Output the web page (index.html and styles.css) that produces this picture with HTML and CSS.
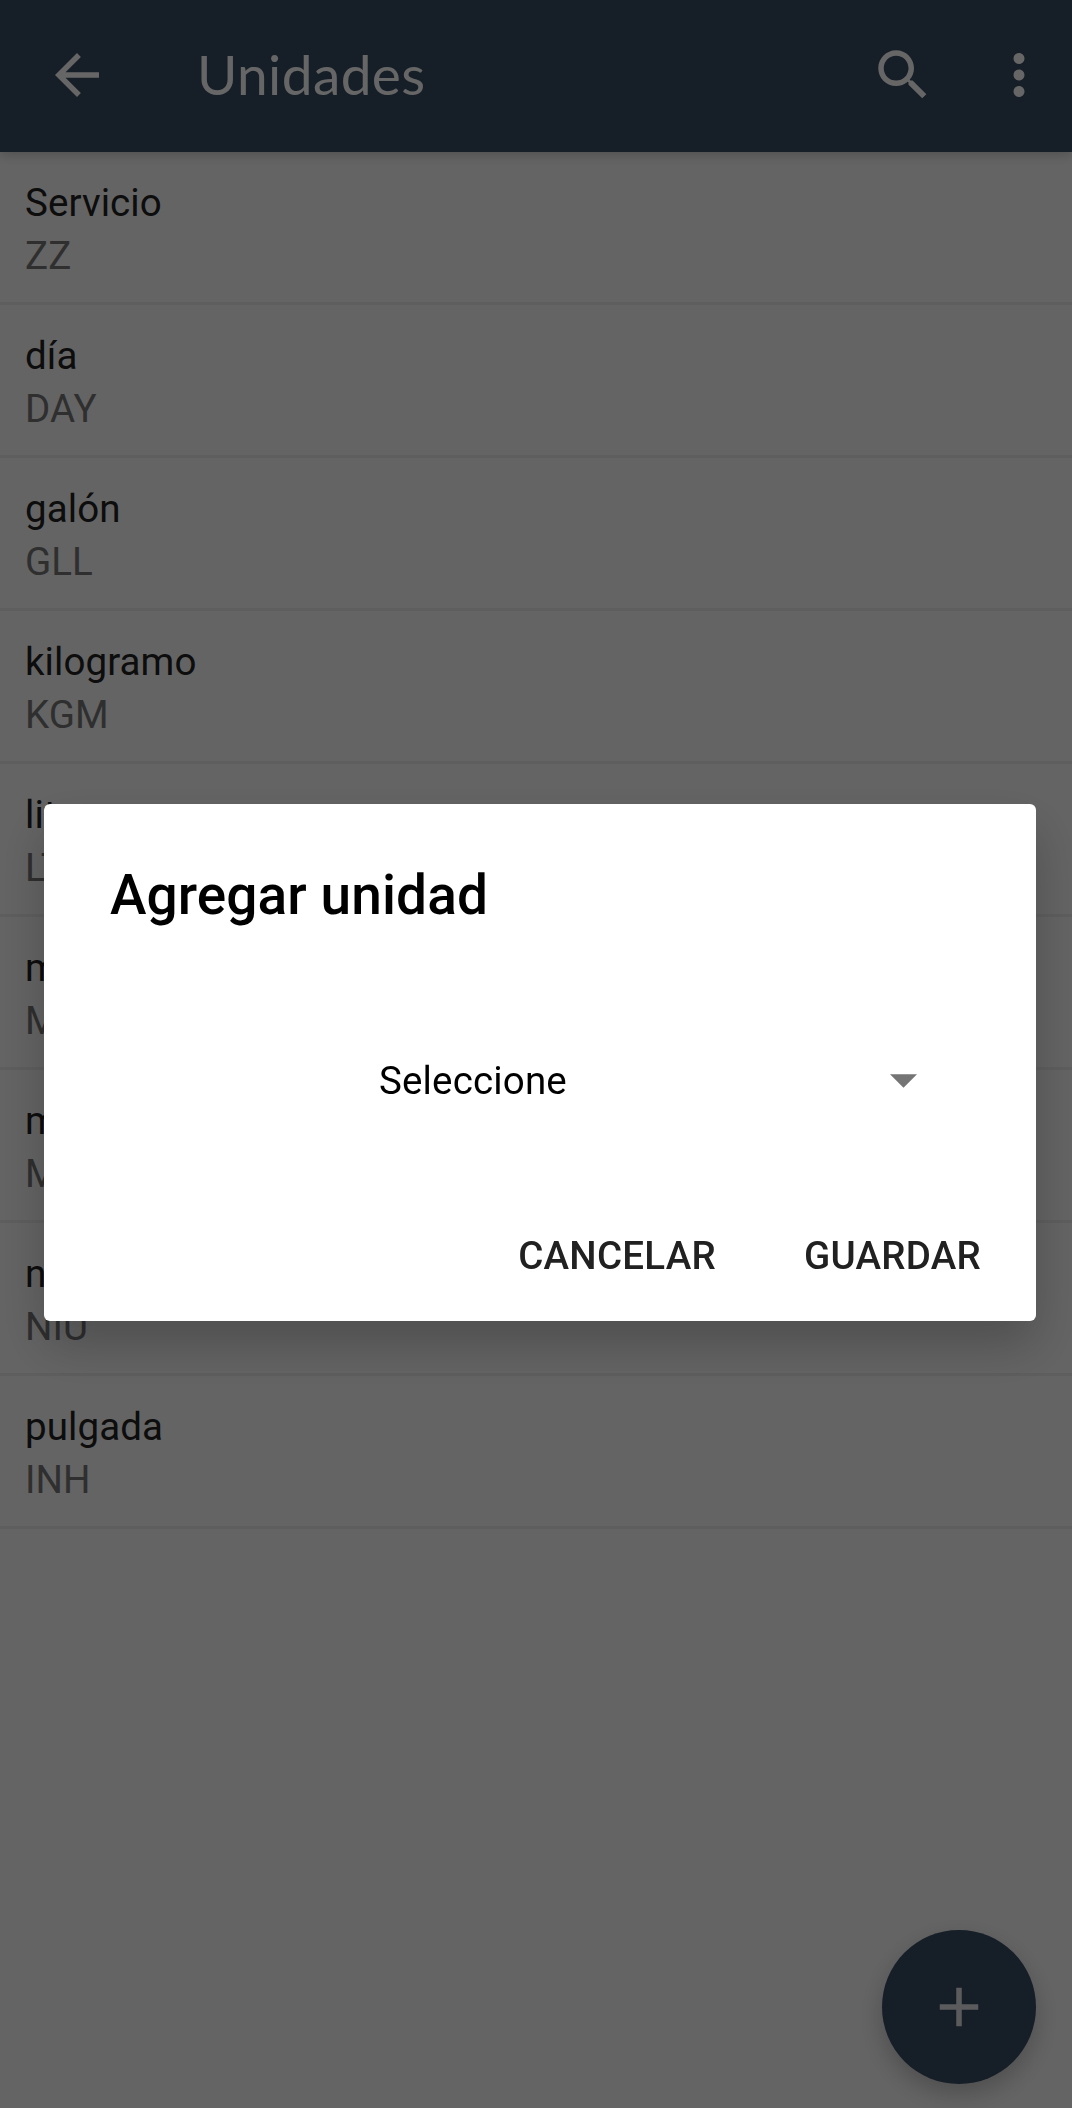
FILE: index.html
```html
<!DOCTYPE html>
<html lang="es">
    <head>
        <meta charset="utf-8">
        <title>Unidades</title>
        <link rel="stylesheet" href="styles.css">
    </head>
    <body>

        <header class="toolbar">
            <svg class="icon back" viewBox="0 0 24 24"><path d="M20 11H7.83l5.59-5.59L12 4l-8 8 8 8 1.41-1.41L7.83 13H20v-2z"/></svg>
            <h1>Unidades</h1>
            <svg class="icon search" viewBox="0 0 24 24"><path d="M15.5 14h-.79l-.28-.27C15.41 12.59 16 11.11 16 9.5 16 5.91 13.09 3 9.5 3S3 5.91 3 9.5 5.91 16 9.5 16c1.61 0 3.09-.59 4.23-1.57l.27.28v.79l5 4.99L20.49 19l-4.99-5zm-6 0C7.01 14 5 11.99 5 9.5S7.01 5 9.5 5 14 7.01 14 9.5 11.99 14 9.5 14z"/></svg>
            <svg class="icon more" viewBox="0 0 24 24"><path d="M12 8c1.1 0 2-.9 2-2s-.9-2-2-2-2 .9-2 2 .9 2 2 2zm0 2c-1.1 0-2 .9-2 2s.9 2 2 2 2-.9 2-2-.9-2-2-2zm0 6c-1.1 0-2 .9-2 2s.9 2 2 2 2-.9 2-2-.9-2-2-2z"/></svg>
        </header>

        <ul class="units">
            <li><span class="name">Servicio</span><span class="code">ZZ</span></li>
            <li><span class="name">día</span><span class="code">DAY</span></li>
            <li><span class="name">galón</span><span class="code">GLL</span></li>
            <li><span class="name">kilogramo</span><span class="code">KGM</span></li>
            <li><span class="name">litro</span><span class="code">LTR</span></li>
            <li><span class="name">metro</span><span class="code">MTR</span></li>
            <li><span class="name">milla</span><span class="code">MTK</span></li>
            <li><span class="name">número</span><span class="code">NIU</span></li>
            <li><span class="name">pulgada</span><span class="code">INH</span></li>
        </ul>

        <button class="fab">
            <svg class="icon" viewBox="0 0 24 24"><path d="M19 13h-6v6h-2v-6H5v-2h6V5h2v6h6v2z"/></svg>
        </button>

        <div class="scrim">
            <div class="dialog">
                <h2>Agregar unidad</h2>
                <div class="spinner">
                    <span>Seleccione</span>
                    <svg class="caret" viewBox="0 0 10 5"><path d="M0 0h10L5 5z"/></svg>
                </div>
                <div class="actions">
                    <button>CANCELAR</button>
                    <button>GUARDAR</button>
                </div>
            </div>
        </div>

    </body>
</html>
```
FILE: styles.css
```css
* { margin: 0; padding: 0; box-sizing: border-box; }
html, body { width: 100%; height: 100%; overflow: hidden; }
body { background: #fafafa; font-family: Roboto, sans-serif; font-size: 38.5px; letter-spacing: 0.08px; color: #212121; }
button { border: none; background: none; font-family: inherit; cursor: pointer; }

.icon { width: 66px; height: 66px; fill: #ffffff; flex: none; }

.toolbar { position: relative; height: 152px; padding: 0 20px 2px 44px; background: #374b61; box-shadow: 0 3px 11px rgba(0, 0, 0, 0.2); display: flex; align-items: center; }
.toolbar h1 { flex: 1; margin: -2px 0 0 87px; font-family: Lato, sans-serif; font-size: 55px; font-weight: normal; line-height: 66px; letter-spacing: 0.4px; color: #ffffff; }
.toolbar .search { margin-right: 50px; }

.units { list-style: none; }
.units li { height: 153px; padding: 24px 25px 0; border-bottom: 3px solid #ebebeb; display: flex; flex-direction: column; }
.units span { line-height: 53px; }
.units .code { color: #757575; }

.fab { position: fixed; right: 36px; bottom: 24px; width: 154px; height: 154px; border-radius: 50%; background: #374b61; box-shadow: 0 10px 24px rgba(0, 0, 0, 0.22); display: flex; align-items: center; justify-content: center; }
.fab .icon { fill: #e4e4e8; }

.scrim { position: fixed; top: 0; left: 0; width: 100%; height: 100%; padding: 17px 0 0 8px; background: rgba(0, 0, 0, 0.6); display: flex; align-items: center; justify-content: center; }

.dialog { width: 992px; height: 517px; padding: 58px 33px 26px 66px; background: #ffffff; border-radius: 6px; box-shadow: 0 24px 50px rgba(0, 0, 0, 0.22); display: flex; flex-direction: column; }
.dialog h2 { font-size: 55px; font-weight: 500; line-height: 66px; color: #000000; }
.dialog .spinner { margin: 123px 86px 0 269px; line-height: 60px; letter-spacing: 0.15px; color: #000000; display: flex; align-items: center; justify-content: space-between; }
.dialog .caret { width: 27px; height: 14px; margin-top: -1px; fill: #757575; }
.dialog .actions { margin-top: auto; display: flex; justify-content: flex-end; gap: 44px; }
.dialog .actions button { height: 80px; padding: 0 22px; font-size: 38.5px; font-weight: 500; letter-spacing: 0.25px; color: #212121; }
```
